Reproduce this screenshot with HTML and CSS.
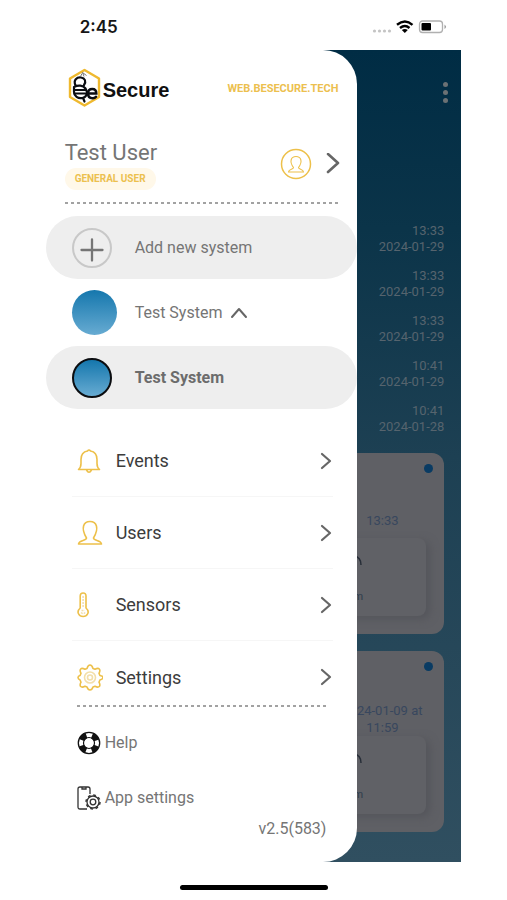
FILE: index.html
```html
<!DOCTYPE html>
<html lang="en">
<head>
<meta charset="utf-8">
<meta name="viewport" content="width=device-width, initial-scale=1">
<title>BeSecure</title>
<link rel="stylesheet" href="styles.css">
</head>
<body>
<div class="phone">
  <header class="status">
    <span class="clock">2:45</span>
    <svg class="signals" width="76" height="16" viewBox="0 0 76 16" aria-hidden="true">
      <g fill="#c4c4c4"><circle cx="3.500" cy="12" r="1.600"/><circle cx="8.500" cy="12" r="1.600"/><circle cx="13.500" cy="12" r="1.600"/><circle cx="18.500" cy="12" r="1.600"/></g>
      <g fill="none" stroke="#000" stroke-width="2.400"><path d="M26 5.800q8-6.500 15.500 0M29 9q5-4 9.500 0"/></g>
      <path d="M30.800 10.900q3-2 6 0l-3 3z"/>
      <rect x="48.500" y="2" width="23" height="11.500" rx="3" fill="#fff" stroke="#b0b0b0" stroke-width="1.300"/>
      <rect x="50.500" y="4" width="9.500" height="7.500" rx="1"/><path d="M73.500 5.500q3 2.300 0 4.600z" fill="#999"/>
    </svg>
  </header>

  <div class="stage">
    <main class="app">
      <div class="app-bar">
        <button class="more" aria-label="More options"><i></i><i></i><i></i></button>
      </div>
      <ul class="log">
        <li>13:33<br>2024-01-29</li>
        <li>13:33<br>2024-01-29</li>
        <li>13:33<br>2024-01-29</li>
        <li>10:41<br>2024-01-29</li>
        <li>10:41<br>2024-01-28</li>
      </ul>
      <section class="card">
        <span class="dot"></span>
        <p class="when">13:33</p>
        <div class="tile"><svg width="10" height="14" viewBox="0 0 10 14"><path d="M1 2q7 1 7 9" fill="none" stroke="#272e38" stroke-width="1.500"/></svg><span>m</span></div>
      </section>
      <section class="card">
        <span class="dot"></span>
        <p class="when">2024-01-09 at<br>11:59</p>
        <div class="tile"><svg width="10" height="14" viewBox="0 0 10 14"><path d="M1 2q7 1 7 9" fill="none" stroke="#272e38" stroke-width="1.500"/></svg><span>m</span></div>
      </section>
    </main>

    <aside class="drawer">
      <div class="brand">
        <svg width="34" height="40" viewBox="0 0 34 40" aria-hidden="true">
          <path d="M16.500 2L31 10.500v18.500L16.500 37.500 2 29V10.500z" fill="#fff" stroke="#efb92f" stroke-width="2.400" stroke-linejoin="round"/>
          <g fill="none" stroke="#0b0d12" stroke-width="2.200" stroke-linecap="round">
            <path d="M7.500 17.500C5 12 9 9 13 9.500s5.500 4 3 7.500M6 19c4-2 9-2 11.500 1.500s1.500 8.500-3 9.500-8.500-2-8.500-6V19"/>
            <path d="M6 22h11.500M6.500 25.500h11M15 30l1.500 3.500"/>
            <path d="M20.500 25.500h7.800q0-4.500-4-4.500-4.300 0-4.300 4.500 0 4.700 4.500 4.700 2.500 0 3.500-1.500" stroke-width="2.500"/>
          </g>
          <path d="M12.500 8.500l1.500-3M16 8.500L14.500 4.500l4 3" fill="none" stroke="#666" stroke-width=".9"/>
        </svg>
        <strong class="wordmark">Secure</strong>
        <a class="site" href="#">WEB.BESECURE.TECH</a>
      </div>

      <div class="profile">
        <div class="who">
          <h1>Test User</h1>
          <span class="role">GENERAL USER</span>
        </div>
        <svg width="32" height="32" viewBox="0 0 32 32" fill="none" stroke="#edc04a" aria-hidden="true">
          <circle cx="16" cy="16" r="14.500" stroke-width="1.500"/>
          <path d="M13.500 19.500c-4.500-6-2.500-11 2.500-11s7 5 2.500 11c0 2 5 1.500 5 4.500h-15c0-3 5-2.500 5-4.500z" stroke-width="1.100"/>
        </svg>
        <button class="open" aria-label="Open profile"><svg width="14" height="22" viewBox="0 0 14 22"><path d="M2 1l10 9L2 19"/></svg></button>
      </div>
      <div class="dashes"></div>

      <div class="systems">
        <button class="system shaded">
          <svg class="badge" width="40" height="40" viewBox="0 0 40 40"><circle cx="20" cy="20" r="19" fill="none" stroke="#c8c8c8" stroke-width="2"/><path d="M20 11.500v21M9.500 22h21" stroke="#757575" stroke-width="2.300" stroke-linecap="round"/></svg>
          <span>Add new system</span>
        </button>
        <button class="system">
          <span class="orb"></span>
          <span>Test System</span>
          <svg class="caret" width="18" height="12" viewBox="0 0 18 12"><path d="M2 10l7-8 7 8"/></svg>
        </button>
        <button class="system shaded current">
          <span class="orb ringed"></span>
          <span>Test System</span>
        </button>
      </div>

      <nav class="menu">
        <a href="#">
          <svg width="26" height="28" viewBox="0 0 26 28"><path d="M1.500 22.500q2.500-2 2.500-6v-4C4 7.500 6.500 4.700 10.500 4q1.500-2 3 0c4 .7 6.500 3.500 6.500 8.500v4q0 4 2.500 6zM9.500 23q2.500 4.500 5 0"/></svg>
          <span>Events</span><svg class="go" width="12" height="18" viewBox="0 0 12 18"><path d="M2 2l8 7-8 7"/></svg>
        </a>
        <a href="#">
          <svg width="26" height="28" viewBox="0 0 26 28"><path d="M9.500 19C3.500 9 6.500 2.500 13 2.500S22.500 9 16.500 19c0 3 7.500 2 8 6h-23c.5-4 8-3 8-6z"/></svg>
          <span>Users</span><svg class="go" width="12" height="18" viewBox="0 0 12 18"><path d="M2 2l8 7-8 7"/></svg>
        </a>
        <a href="#">
          <svg width="26" height="28" viewBox="0 0 26 28"><path d="M3.200 17V5q0-3 2.900-3T9 5v12c4.500 4 1 8.500-2.900 8.500S-1.300 21 3.200 17z"/><path d="M6.100 5v12M4 21.500q2 2 4.200 0M4.500 19.500h3.200" stroke="#f3dfaa" stroke-width="1.500" stroke-dasharray="2 1"/></svg>
          <span>Sensors</span><svg class="go" width="12" height="18" viewBox="0 0 12 18"><path d="M2 2l8 7-8 7"/></svg>
        </a>
        <a href="#">
          <svg width="26" height="28" viewBox="0 0 26 28"><path d="M10 5.500q1-3.500 3-3.500t3 3.500l2 .8q3-1.600 4.300-.3t-.3 4.300l.9 2.200q3.100.5 3.100 2t-3.100 2.500l-.9 2.200q1.600 3 .3 4.300t-4.300-.3l-2 .8q-1 3-3 3t-3-3l-2-.8q-3 1.600-4.300.3t.3-4.300l-.9-2.200Q1 16 1 14.500t2.100-2l.9-2.200q-1.600-3-.3-4.300t4.300.3z"/><circle cx="13" cy="14.500" r="5.500" stroke="#f3dfaa"/><circle cx="13" cy="14.500" r="2.500" stroke="#f3dfaa"/></svg>
          <span>Settings</span><svg class="go" width="12" height="18" viewBox="0 0 12 18"><path d="M2 2l8 7-8 7"/></svg>
        </a>
      </nav>

      <div class="extras">
        <div class="dashes"></div>
        <a href="#">
          <svg width="24" height="24" viewBox="0 0 24 24" fill="none" stroke="#111"><circle cx="12" cy="12" r="10.700" stroke-width="1.300"/><circle cx="12" cy="12" r="8" stroke-width="5.500" stroke-dasharray="6.800 5.766" stroke-dashoffset="-2.883"/><circle cx="12" cy="12" r="5.500" stroke-width="1.200"/></svg>
          <span>Help</span>
        </a>
        <a href="#">
          <svg width="24" height="24" viewBox="0 0 24 24" fill="none" stroke="#333" stroke-width="1.300"><path d="M10 23H3q-2 0-2-2V3q0-2 2-2h8q2 0 2 2v5M5 1.500V3h4V1.500"/><circle cx="16" cy="16" r="6"/><circle cx="16" cy="16" r="2.800"/><circle cx="16" cy="16" r="7" stroke-width="1.500" stroke-dasharray="2.750 2.748"/></svg>
          <span>App settings</span>
        </a>
        <p class="version">v2.5(583)</p>
      </div>
    </aside>
  </div>
  <div class="home-bar"></div>
</div>
</body>
</html>
```
FILE: styles.css
```css
* { box-sizing: border-box; }
body { margin: 0; background: #fff; font-family: Roboto, sans-serif; color: #757575; }
h1, p, ul { margin: 0; padding: 0; }
button { border: 0; padding: 0; background: none; font: inherit; color: inherit; }
a { color: inherit; text-decoration: none; }
svg { display: block; flex: none; }

.phone { padding: 0 9%; }

.status { height: 50px; display: flex; align-items: center; justify-content: space-between; padding: 4px 14px 0 34px; }
.clock { font: 600 17px/20px Inter, sans-serif; color: #161616; }

.stage { display: grid; grid-template-columns: 3fr 1fr; }
.app, .drawer { grid-row: 1; min-width: 0; }
.app {
  grid-column: 1 / -1;
  padding: 0 17px 28px;
  background: linear-gradient(#002c44, #0b3449 22%, #1d4053 50%, #304f60);
}

/* dimmed screen behind the drawer */
.app-bar { height: 172px; padding-top: 32px; display: flex; justify-content: flex-end; align-items: flex-start; }
.more { display: grid; gap: 2px; margin-right: -4px; }
.more i { width: 5px; height: 5px; margin: 0 0 1px; border-radius: 50%; background: #6b7174; }
.log { list-style: none; display: grid; gap: 13px; text-align: right; font-size: 13px; line-height: 16px; color: #56646e; padding: 1px 0 18px; }
.log li { height: 32px; }
.card { position: relative; height: 181px; border-radius: 12px; background: #5f6065; display: grid; grid-template-rows: 1fr 78px; justify-items: center; align-items: center; margin-left: auto; width: 124px; padding: 50px 0 18px; }
.card + .card { margin-top: 17px; }
.dot { position: absolute; top: 11px; right: 11px; width: 9px; height: 9px; border-radius: 50%; background: #093b63; }
.when { text-align: center; font-size: 13px; line-height: 17px; color: #38475e; white-space: nowrap; }
.tile { width: 88px; height: 78px; border-radius: 8px; background: #606166; box-shadow: 4px 3px 8px #54555b; display: grid; align-content: space-between; padding: 16px 15px 12px; font-size: 11px; line-height: 14px; color: #2f3d4c; }
.tile span { width: 10px; }

.drawer { position: relative; grid-column: 1; background: #fff; border-radius: 0 34px 34px 0; }
.brand { display: flex; align-items: center; height: 76px; padding: 0 19px 0 22px; }
.wordmark { flex: 1; font: 700 20px/24px "Liberation Sans", sans-serif; color: #101010; padding: 4px 0 0 1px; }
.site { font-size: 11px; font-weight: 700; color: #ecc04f; }

.profile { display: flex; align-items: center; height: 76px; padding: 0 17px 0 19px; }
.who { flex: 1; }
h1 { font-size: 22px; line-height: 28px; font-weight: 400; }
.role { display: inline-block; border-radius: 11px; padding: 0 10px; background: #fff8e9; color: #ecc04f; font-size: 10px; line-height: 22px; font-weight: 700; }
.open { margin-left: 14px; }
.open path, .go path, .caret path { fill: none; stroke: #666; stroke-width: 2.6; stroke-linecap: round; stroke-linejoin: round; }
.dashes { height: 2px; margin: 0 17px 0 19px; background: repeating-linear-gradient(90deg, #a2a2a2 0 3px, transparent 3px 6px); }

.systems { padding-top: 12px; display: grid; }
.system { display: flex; align-items: center; height: 63px; border-radius: 32px; padding-left: 26px; font-size: 16px; text-align: left; gap: 8px; }
.system:nth-child(2) { height: 67px; }
.system.shaded { background: #eee; gap: 13px; }
.system > :first-child { margin-right: 10px; }
.orb { flex: none; width: 45px; height: 45px; border-radius: 50%; background: linear-gradient(#1577ad, #67abd2); }
.orb.ringed { width: 40px; height: 40px; border: 2px solid #0b0d10; }
.current { font-weight: 700; color: #6c6c6c; }
.caret path { stroke-width: 2; }

.menu { padding: 16px 24px 0 26px; }
.menu a { display: flex; align-items: center; height: 72px; padding: 0 1px 0 5px; font-size: 18px; color: #3c3c3c; border-bottom: 1px solid #f6f6f6; }
.menu a:last-child { height: 64px; padding-top: 8px; border: 0; }
.menu a > svg:first-child { fill: none; stroke: #edc04a; stroke-width: 1.6; stroke-linejoin: round; margin-right: 13px; }
.menu span { flex: 1; }
.menu a > .go path { stroke-width: 2.2; }

.extras { padding: 0 31px 23px 31px; }
.extras .dashes { margin: 0 0 8px; }
.extras a { display: flex; align-items: center; gap: 4px; height: 55px; font-size: 16px; }
.version { text-align: right; font-size: 16px; line-height: 20px; margin-top: -6px; }

.home-bar { width: 148px; height: 5px; margin: 23px auto 10px; border-radius: 3px; background: #000; }
```
